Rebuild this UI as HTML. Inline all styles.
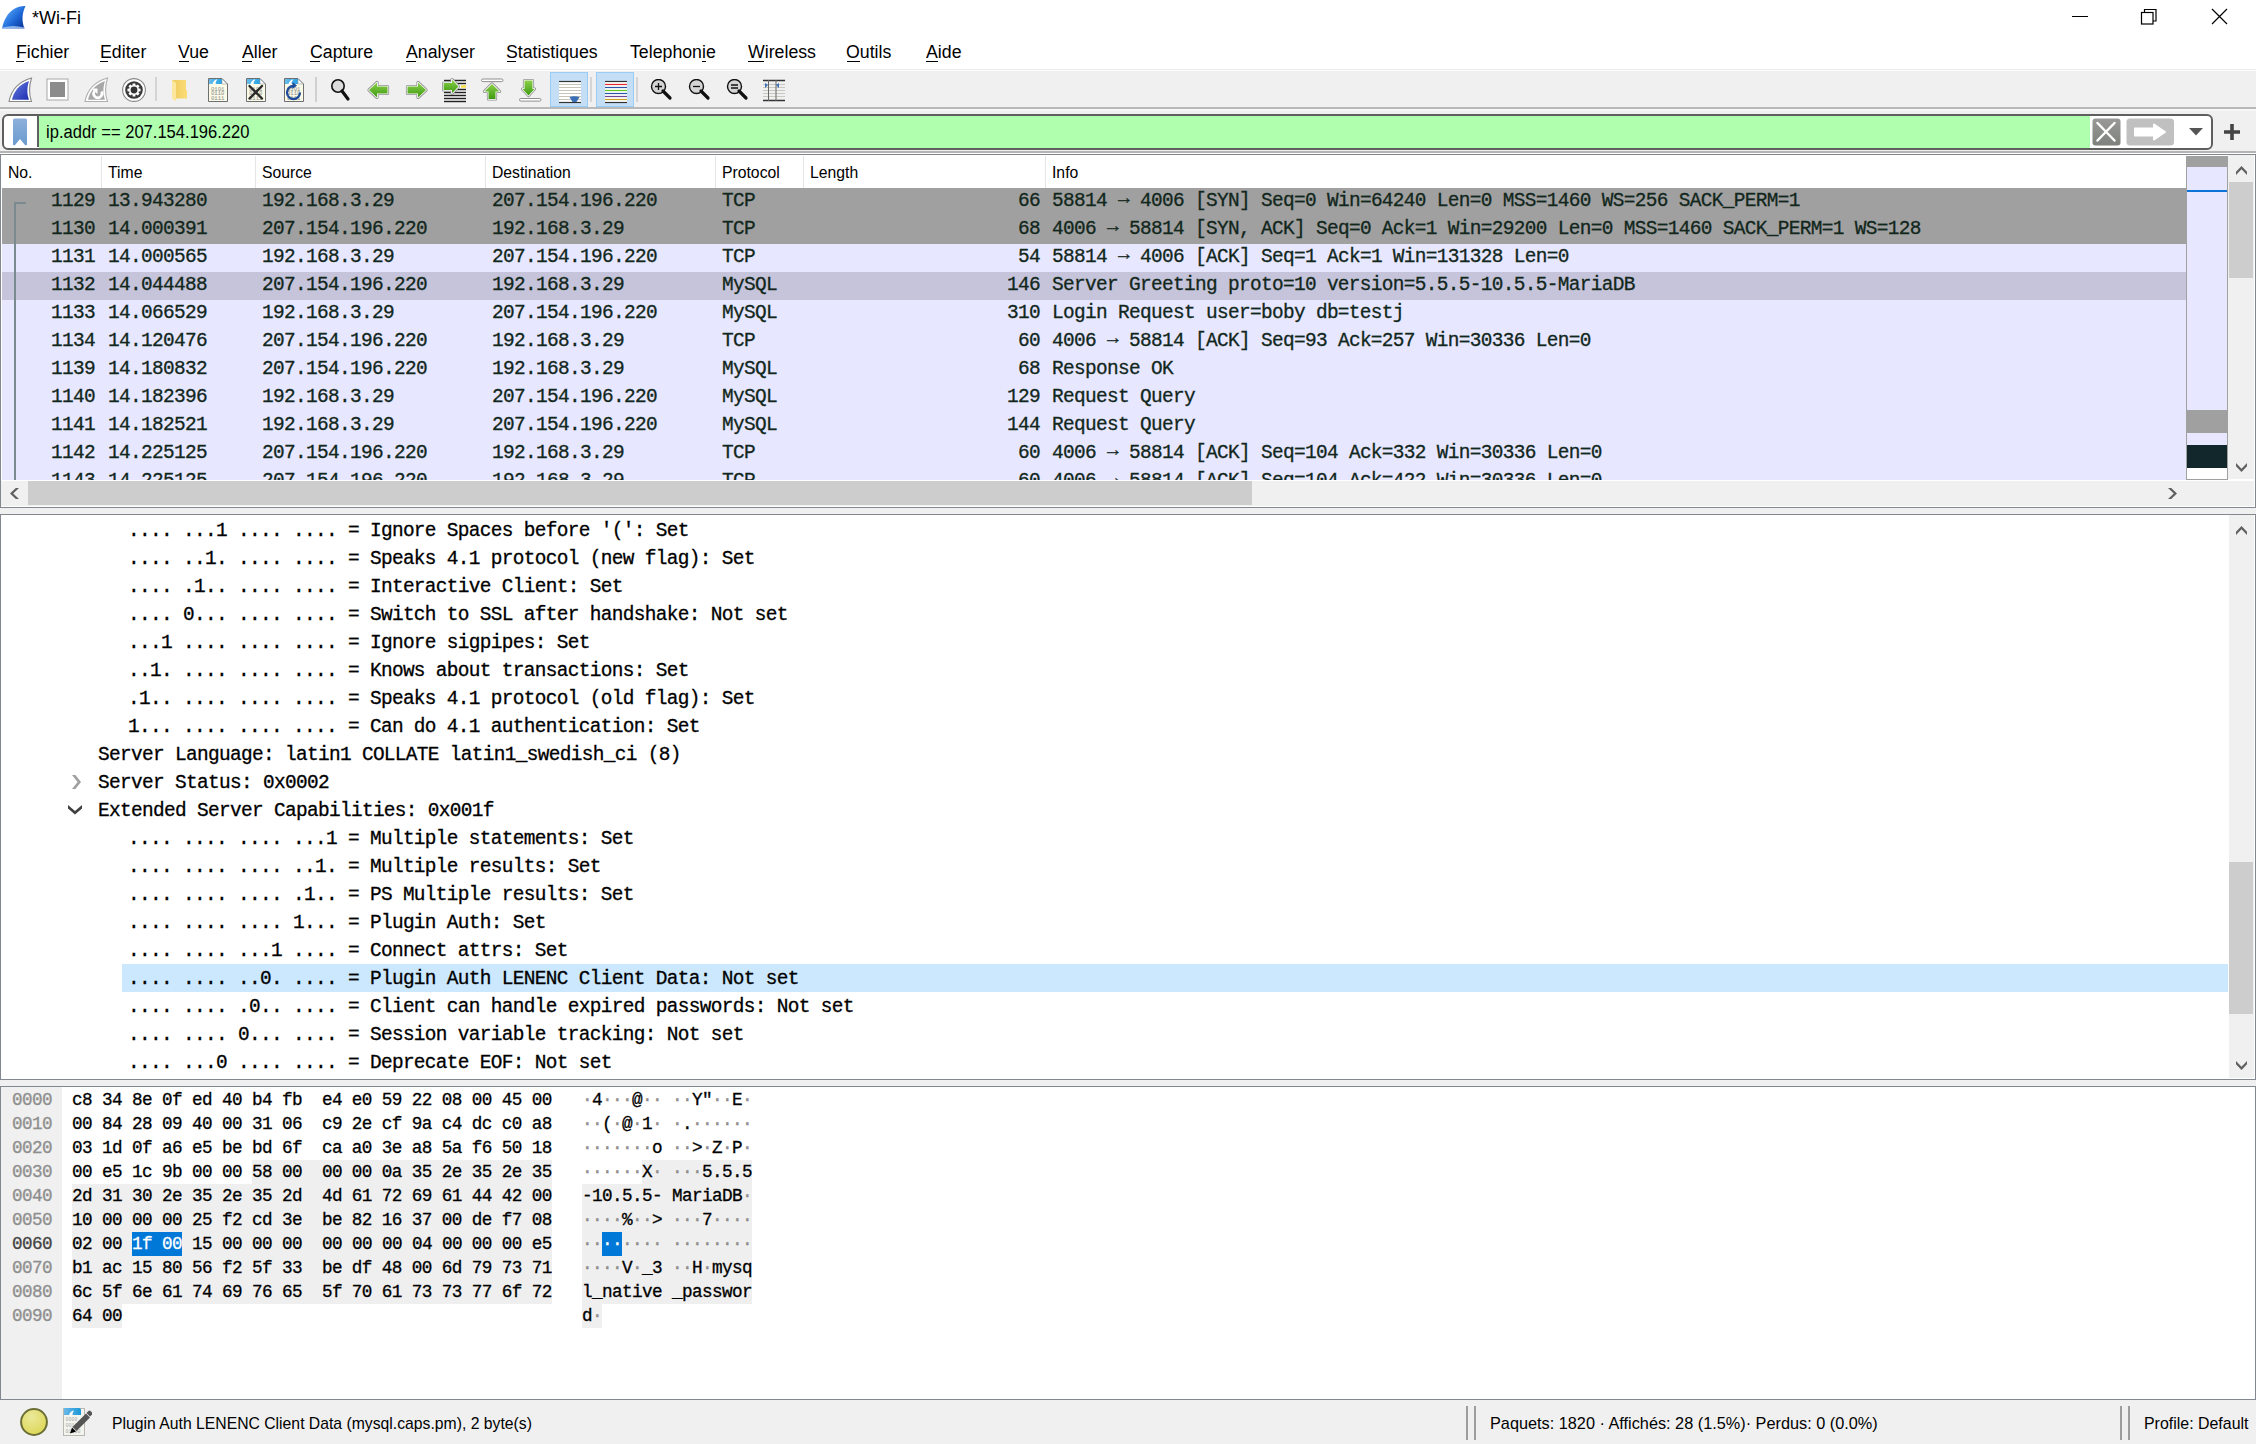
<!DOCTYPE html>
<html><head><meta charset="utf-8"><title>Wireshark</title>
<style>
html,body{margin:0;padding:0;}
body{width:2256px;height:1444px;position:relative;overflow:hidden;background:#fff;font-family:"Liberation Sans", sans-serif;}
body div, body span, body svg{position:absolute;}
body div div, body div span, body div svg{position:absolute;}
.t{font-family:"Liberation Sans", sans-serif;white-space:pre;line-height:normal;transform-origin:0 0;}
.m .ar{position:relative;top:-2px;}
.m .dt{position:relative;color:#8c8c8c;}
.m{font-family:"Liberation Mono", monospace;white-space:pre;line-height:normal;-webkit-text-stroke-width:0.3px;}
</style></head><body>
<div style="left:0px;top:0px;width:2256px;height:69px;background:#ffffff;"></div>
<svg style="left:0px;top:4px" width="27" height="26" viewBox="0 0 27 26">
<defs><linearGradient id="lg1" x1="0.1" y1="0.2" x2="0.9" y2="0.9"><stop offset="0" stop-color="#5aa8f8"/><stop offset="0.55" stop-color="#1f6ad8"/><stop offset="1" stop-color="#0a3aa0"/></linearGradient></defs>
<path d="M2 24.5 C4 14 10 5 19 2.7 Q23 1.8 25.5 2 C22 9 21.5 17 24.5 24.5 Z" fill="url(#lg1)"/>
<path d="M2.5 23.5 Q13 20.5 24.5 23.5 L25 24.5 L2 24.5 Z" fill="#a8c8f0" opacity="0.8"/>
</svg>
<span class="t" style="left:32px;top:8.01px;font-size:18px;color:#000;">*Wi-Fi</span>
<div style="left:2072px;top:16px;width:16px;height:1px;background:#000;"></div>
<svg style="left:2138px;top:6px" width="22" height="22" viewBox="0 0 22 22" fill="none" stroke="#000" stroke-width="1.2">
<rect x="3.5" y="6.5" width="11.5" height="11.5"/><path d="M6.5 6.5 V3.5 H18 V15 H15"/></svg>
<svg style="left:2208px;top:5px" width="24" height="24" viewBox="0 0 24 24" fill="none" stroke="#000" stroke-width="1.2">
<path d="M4 4 L19 19 M19 4 L4 19"/></svg>
<span class="t" style="left:16px;top:41.71px;font-size:18px;color:#000;transform:scaleX(0.985);">Fichier</span>
<div style="left:16px;top:61px;width:8px;height:1px;background:#000;"></div>
<span class="t" style="left:100px;top:41.71px;font-size:18px;color:#000;transform:scaleX(0.985);">Editer</span>
<div style="left:100px;top:61px;width:8px;height:1px;background:#000;"></div>
<span class="t" style="left:178px;top:41.71px;font-size:18px;color:#000;transform:scaleX(0.985);">Vue</span>
<div style="left:178.5px;top:61px;width:10px;height:1px;background:#000;"></div>
<span class="t" style="left:242px;top:41.71px;font-size:18px;color:#000;transform:scaleX(0.985);">Aller</span>
<div style="left:242px;top:61px;width:10px;height:1px;background:#000;"></div>
<span class="t" style="left:310px;top:41.71px;font-size:18px;color:#000;transform:scaleX(0.985);">Capture</span>
<div style="left:310px;top:61px;width:10px;height:1px;background:#000;"></div>
<span class="t" style="left:406px;top:41.71px;font-size:18px;color:#000;transform:scaleX(0.985);">Analyser</span>
<div style="left:406px;top:61px;width:10px;height:1px;background:#000;"></div>
<span class="t" style="left:506px;top:41.71px;font-size:18px;color:#000;transform:scaleX(0.985);">Statistiques</span>
<div style="left:506.5px;top:61px;width:9px;height:1px;background:#000;"></div>
<span class="t" style="left:630px;top:41.71px;font-size:18px;color:#000;transform:scaleX(0.985);">Telephonie</span>
<div style="left:701.5px;top:61px;width:4px;height:1px;background:#000;"></div>
<span class="t" style="left:748px;top:41.71px;font-size:18px;color:#000;transform:scaleX(0.985);">Wireless</span>
<div style="left:748px;top:61px;width:16px;height:1px;background:#000;"></div>
<span class="t" style="left:846px;top:41.71px;font-size:18px;color:#000;transform:scaleX(0.985);">Outils</span>
<div style="left:847px;top:61px;width:13px;height:1px;background:#000;"></div>
<span class="t" style="left:926px;top:41.71px;font-size:18px;color:#000;transform:scaleX(0.985);">Aide</span>
<div style="left:926px;top:61px;width:12px;height:1px;background:#000;"></div>
<div style="left:0px;top:69px;width:2256px;height:1px;background:#ececec;"></div>
<div style="left:0px;top:70px;width:2256px;height:1px;background:#fdfdfd;"></div>
<div style="left:0px;top:71px;width:2256px;height:36px;background:#f0f0f0;"></div>
<div style="left:0px;top:107px;width:2256px;height:2px;background:#b9b9b9;"></div>
<div style="left:0px;top:109px;width:2256px;height:44px;background:#f0f0f0;"></div>
<div style="left:0px;top:109px;width:2256px;height:2px;background:#f7f7f7;"></div>
<svg style="left:8px;top:77px" width="26" height="26" viewBox="0 0 26 26"><defs><linearGradient id="fin" x1="0" y1="0" x2="1" y2="1"><stop offset="0" stop-color="#6a7fe0"/><stop offset="1" stop-color="#1c2eb0"/></linearGradient></defs>
<path d="M1 24.5 C3 14 9.5 5 23.5 1 C21.3 8 20.8 17 23.5 24.5 Z" fill="#fff" stroke="#8a8a8a" stroke-width="1.1"/>
<path d="M4 22.8 C5.8 14.5 11 7.5 21 4 C19 10 18.8 17 21 22.8 Z" fill="url(#fin)"/></svg>
<svg style="left:46px;top:78px" width="24" height="24" viewBox="0 0 24 24"><rect x="1" y="1" width="21" height="21" fill="#fff" stroke="#a8a8a8" stroke-width="1"/><rect x="4" y="4" width="15" height="15" fill="#8c8c8c"/></svg>
<svg style="left:84px;top:77px" width="26" height="26" viewBox="0 0 26 26"><path d="M1 24.5 C3 14 9.5 5 23.5 1 C21.3 8 20.8 17 23.5 24.5 Z" fill="#fff" stroke="#b0b0b0" stroke-width="1.1"/>
<path d="M4 22.8 C5.8 14.5 11 7.5 21 4 C19 10 18.8 17 21 22.8 Z" fill="#a8a8a8"/>
<path d="M10.5 14 A4.2 4.2 0 1 0 17.5 14.5" fill="none" stroke="#fff" stroke-width="2.6"/>
<path d="M7.5 11.5 L13.5 11.5 L13.5 17 Z" fill="#fff"/></svg>
<svg style="left:121px;top:77px" width="26" height="26" viewBox="0 0 26 26"><circle cx="13" cy="13" r="11.4" fill="#fff" stroke="#8a8a8a" stroke-width="1.1"/>
<circle cx="13" cy="13" r="8.8" fill="#3a3a3a"/>
<path d="M17.78 11.52 L19.57 11.67 L19.57 14.33 L17.78 14.48 L17.42 15.33 L18.58 16.70 L16.70 18.58 L15.33 17.42 L14.48 17.78 L14.33 19.57 L11.67 19.57 L11.52 17.78 L10.67 17.42 L9.30 18.58 L7.42 16.70 L8.58 15.33 L8.22 14.48 L6.43 14.33 L6.43 11.67 L8.22 11.52 L8.58 10.67 L7.42 9.30 L9.30 7.42 L10.67 8.58 L11.52 8.22 L11.67 6.43 L14.33 6.43 L14.48 8.22 L15.33 8.58 L16.70 7.42 L18.58 9.30 L17.42 10.67 Z" fill="#fff"/>
<circle cx="13" cy="13" r="3.4" fill="#333"/></svg>
<div style="left:155px;top:77px;width:2px;height:24px;background:#d5d5d5;"></div>
<svg style="left:171px;top:79px" width="17" height="23" viewBox="0 0 17 23"><defs><linearGradient id="fd" x1="0" y1="0" x2="1" y2="0"><stop offset="0" stop-color="#eccb5c"/><stop offset="1" stop-color="#fbdc78"/></linearGradient></defs>
<path d="M1 1 H15 V11 H16 V19.5 H5 Z" fill="url(#fd)"/>
<path d="M1 1 L5 4 V22.5 L1 19.5 Z" fill="#fde79e"/></svg>
<svg style="left:207px;top:77px" width="22" height="26" viewBox="0 0 22 26"><defs><linearGradient id="fb207" x1="0" y1="0" x2="1" y2="0"><stop offset="0" stop-color="#68bdea"/><stop offset="1" stop-color="#0f98e2"/></linearGradient></defs>
<path d="M1.5 1.5 H15 L20.5 7 V24.5 H1.5 Z" fill="#fbfbe8" stroke="#6f6f6f" stroke-width="1"/>
<path d="M2 2 H15 L20 7 H2 Z" fill="url(#fb207)"/>
<path d="M5.5 7 Q6.5 3 10.5 2.3 Q8.3 4.5 8.8 7 Z" fill="#fff"/>
<path d="M15 2 V7 H20 Z" fill="#fff" stroke="#999" stroke-width="0.6"/>
<text x="4" y="13.5" font-family="Liberation Mono" font-size="5.6" fill="#8a8a8a">0101</text>
<text x="4" y="18" font-family="Liberation Mono" font-size="5.6" fill="#8a8a8a">0110</text>
<text x="4" y="22.5" font-family="Liberation Mono" font-size="5.6" fill="#8a8a8a">0111</text></svg>
<svg style="left:245px;top:77px" width="22" height="26" viewBox="0 0 22 26"><defs><linearGradient id="fb245" x1="0" y1="0" x2="1" y2="0"><stop offset="0" stop-color="#68bdea"/><stop offset="1" stop-color="#0f98e2"/></linearGradient></defs>
<path d="M1.5 1.5 H15 L20.5 7 V24.5 H1.5 Z" fill="#fbfbe8" stroke="#6f6f6f" stroke-width="1"/>
<path d="M2 2 H15 L20 7 H2 Z" fill="url(#fb245)"/>
<path d="M5.5 7 Q6.5 3 10.5 2.3 Q8.3 4.5 8.8 7 Z" fill="#fff"/>
<path d="M15 2 V7 H20 Z" fill="#fff" stroke="#999" stroke-width="0.6"/>
<text x="4" y="13.5" font-family="Liberation Mono" font-size="5.6" fill="#8a8a8a">0101</text>
<text x="4" y="18" font-family="Liberation Mono" font-size="5.6" fill="#8a8a8a">0110</text>
<text x="4" y="22.5" font-family="Liberation Mono" font-size="5.6" fill="#8a8a8a">0111</text><path d="M4.5 9 L17 21.5 M17 9 L4.5 21.5" stroke="#2a2a2a" stroke-width="2.4" stroke-linecap="round"/></svg>
<svg style="left:283px;top:77px" width="22" height="26" viewBox="0 0 22 26"><defs><linearGradient id="fb283" x1="0" y1="0" x2="1" y2="0"><stop offset="0" stop-color="#68bdea"/><stop offset="1" stop-color="#0f98e2"/></linearGradient></defs>
<path d="M1.5 1.5 H15 L20.5 7 V24.5 H1.5 Z" fill="#fbfbe8" stroke="#6f6f6f" stroke-width="1"/>
<path d="M2 2 H15 L20 7 H2 Z" fill="url(#fb283)"/>
<path d="M5.5 7 Q6.5 3 10.5 2.3 Q8.3 4.5 8.8 7 Z" fill="#fff"/>
<path d="M15 2 V7 H20 Z" fill="#fff" stroke="#999" stroke-width="0.6"/>
<text x="4" y="13.5" font-family="Liberation Mono" font-size="5.6" fill="#8a8a8a">0101</text>
<text x="4" y="18" font-family="Liberation Mono" font-size="5.6" fill="#8a8a8a">0110</text>
<text x="4" y="22.5" font-family="Liberation Mono" font-size="5.6" fill="#8a8a8a">0111</text><path d="M17 15.5 A6.5 6.5 0 1 1 10.5 9" fill="none" stroke="#1d4c9a" stroke-width="2.3"/><path d="M9.5 5 L14 8.5 L9.5 12 Z" fill="#1d4c9a"/></svg>
<div style="left:315px;top:77px;width:2px;height:25px;background:#d0d0d0;"></div>
<svg style="left:330px;top:78px" width="22" height="25" viewBox="0 0 22 25"><circle cx="8" cy="8" r="6.2" fill="#ddd" stroke="#111" stroke-width="1.6"/><path d="M12 13 L18 21" stroke="#111" stroke-width="3.2" stroke-linecap="round"/></svg>
<svg style="left:0;top:0" width="0" height="0"><defs><linearGradient id="gr" x1="0" y1="0" x2="0" y2="1"><stop offset="0" stop-color="#8bd04a"/><stop offset="1" stop-color="#3e9a12"/></linearGradient></defs></svg>
<svg style="left:366px;top:79px" width="25" height="22" viewBox="0 0 25 22"><path d="M3 11 L11 3.5 L11 7.5 L21.5 7.5 L21.5 14.5 L11 14.5 L11 18.5 Z" fill="none" stroke="#8f8f8f" stroke-width="3.2" stroke-linejoin="round"/><path d="M3 11 L11 3.5 L11 7.5 L21.5 7.5 L21.5 14.5 L11 14.5 L11 18.5 Z" fill="none" stroke="#fff" stroke-width="1.6" stroke-linejoin="round"/><path d="M3 11 L11 3.5 L11 7.5 L21.5 7.5 L21.5 14.5 L11 14.5 L11 18.5 Z" fill="url(#gr)"/></svg>
<svg style="left:404px;top:79px" width="25" height="22" viewBox="0 0 25 22"><path d="M22 11 L14 3.5 L14 7.5 L3.5 7.5 L3.5 14.5 L14 14.5 L14 18.5 Z" fill="none" stroke="#8f8f8f" stroke-width="3.2" stroke-linejoin="round"/><path d="M22 11 L14 3.5 L14 7.5 L3.5 7.5 L3.5 14.5 L14 14.5 L14 18.5 Z" fill="none" stroke="#fff" stroke-width="1.6" stroke-linejoin="round"/><path d="M22 11 L14 3.5 L14 7.5 L3.5 7.5 L3.5 14.5 L14 14.5 L14 18.5 Z" fill="url(#gr)"/></svg>
<svg style="left:440px;top:77px" width="28" height="27" viewBox="0 0 28 27"><rect x="4" y="2.5" width="22" height="23" fill="#fff"/><path d="M4 3.5 H26 M4 6.5 H26 M4 12.5 H26 M4 15.5 H26 M4 18.5 H26 M4 21.5 H26 M4 24.5 H26" stroke="#222" stroke-width="1.3"/>
<path d="M21 9.5 H26" stroke="#f5dc40" stroke-width="2.4"/><path d="M18.5 9.5 L12 2.7 L12 6 L3.6 6 L3.6 13 L12 13 L12 16.3 Z" fill="none" stroke="#8f8f8f" stroke-width="3.2" stroke-linejoin="round"/><path d="M18.5 9.5 L12 2.7 L12 6 L3.6 6 L3.6 13 L12 13 L12 16.3 Z" fill="none" stroke="#fff" stroke-width="1.6" stroke-linejoin="round"/><path d="M18.5 9.5 L12 2.7 L12 6 L3.6 6 L3.6 13 L12 13 L12 16.3 Z" fill="url(#gr)"/></svg>
<svg style="left:479px;top:77px" width="27" height="26" viewBox="0 0 27 26"><rect x="2.5" y="2" width="21.5" height="2.6" rx="1.3" fill="#fff" stroke="#8f8f8f" stroke-width="1"/><path d="M13 7 L20.5 14.5 L16.5 14.5 L16.5 22 L9.5 22 L9.5 14.5 L5.5 14.5 Z" fill="none" stroke="#8f8f8f" stroke-width="3.2" stroke-linejoin="round"/><path d="M13 7 L20.5 14.5 L16.5 14.5 L16.5 22 L9.5 22 L9.5 14.5 L5.5 14.5 Z" fill="none" stroke="#fff" stroke-width="1.6" stroke-linejoin="round"/><path d="M13 7 L20.5 14.5 L16.5 14.5 L16.5 22 L9.5 22 L9.5 14.5 L5.5 14.5 Z" fill="url(#gr)"/></svg>
<svg style="left:517px;top:77px" width="27" height="26" viewBox="0 0 27 26"><rect x="2.5" y="21.5" width="21.5" height="2.6" rx="1.3" fill="#fff" stroke="#8f8f8f" stroke-width="1"/><path d="M11.5 18.5 L17.5 12 L15.5 12 L15.5 3.6 L7.5 3.6 L7.5 12 L5.5 12 Z" fill="none" stroke="#8f8f8f" stroke-width="3.2" stroke-linejoin="round"/><path d="M11.5 18.5 L17.5 12 L15.5 12 L15.5 3.6 L7.5 3.6 L7.5 12 L5.5 12 Z" fill="none" stroke="#fff" stroke-width="1.6" stroke-linejoin="round"/><path d="M11.5 18.5 L17.5 12 L15.5 12 L15.5 3.6 L7.5 3.6 L7.5 12 L5.5 12 Z" fill="url(#gr)"/></svg>
<div style="left:550px;top:72px;width:38px;height:35px;background:#c4def5;box-sizing:border-box;border:1px solid #99ccf5;"></div>
<svg style="left:558px;top:79px" width="24" height="25" viewBox="0 0 24 25"><rect x="1" y="2" width="22" height="22" fill="#fff"/>
<path d="M1 2.5 H23" stroke="#333" stroke-width="1.2"/>
<path d="M1 5.5 H23 M1 8.5 H23 M1 11.5 H23 M1 14.5 H23 M1 17.5 H23 M1 20.5 H23" stroke="#c4c4ba" stroke-width="1.2"/>
<path d="M1 23.5 H23" stroke="#333" stroke-width="1.2"/>
<path d="M11.5 18 Q16.5 16.5 21.5 18 L18.5 23 L14.5 23 Z" fill="#3a6fb5"/></svg>
<div style="left:590px;top:77px;width:2px;height:25px;background:#d5d5d5;"></div>
<div style="left:596px;top:72px;width:38px;height:35px;background:#c4def5;box-sizing:border-box;border:1px solid #99ccf5;"></div>
<svg style="left:604px;top:79px" width="24" height="25" viewBox="0 0 24 25"><rect x="1" y="2" width="22" height="22" fill="#fff"/>
<path d="M1 2.5 H23" stroke="#333" stroke-width="1.2"/>
<path d="M1 5.5 H23" stroke="#e02828" stroke-width="1.2"/>
<path d="M1 8.5 H23" stroke="#2a56a8" stroke-width="1.2"/>
<path d="M1 11.5 H23" stroke="#5ac81e" stroke-width="1.2"/>
<path d="M1 14.5 H23" stroke="#2a56a8" stroke-width="1.2"/>
<path d="M1 17.5 H23" stroke="#704890" stroke-width="1.2"/>
<path d="M1 20.5 H23" stroke="#c8a020" stroke-width="1.2"/>
<path d="M1 23.5 H23" stroke="#333" stroke-width="1.2"/></svg>
<div style="left:636px;top:77px;width:2px;height:25px;background:#d5d5d5;"></div>
<svg style="left:650px;top:79px" width="24" height="24" viewBox="0 0 24 24"><circle cx="8.5" cy="7.5" r="7" fill="#d4d4d4" stroke="#111" stroke-width="1.4"/>
<path d="M13 12 L20 19" stroke="#111" stroke-width="3.2" stroke-linecap="round"/><path d="M5 7.5 H12 M8.5 4 V11" stroke="#111" stroke-width="1.3"/></svg>
<svg style="left:688px;top:79px" width="24" height="24" viewBox="0 0 24 24"><circle cx="8.5" cy="7.5" r="7" fill="#d4d4d4" stroke="#111" stroke-width="1.4"/>
<path d="M13 12 L20 19" stroke="#111" stroke-width="3.2" stroke-linecap="round"/><path d="M5 7.5 H12" stroke="#111" stroke-width="1.3"/></svg>
<svg style="left:726px;top:79px" width="24" height="24" viewBox="0 0 24 24"><circle cx="8.5" cy="7.5" r="7" fill="#d4d4d4" stroke="#111" stroke-width="1.4"/>
<path d="M13 12 L20 19" stroke="#111" stroke-width="3.2" stroke-linecap="round"/><path d="M5 6 H12 M5 9 H12" stroke="#111" stroke-width="1.3"/></svg>
<svg style="left:762px;top:78px" width="24" height="24" viewBox="0 0 24 24"><path d="M1 2.5 H23 M1 22.5 H23" stroke="#333" stroke-width="1.3"/>
<path d="M1 6.5 H23 M1 9.5 H23 M1 12.5 H23 M1 15.5 H23 M1 18.5 H23" stroke="#c8c8c0" stroke-width="1.1"/>
<path d="M6.5 2 V23 M14 2 V23" stroke="#666" stroke-width="1"/>
<path d="M3 5 L6 7 L3 10 Z M17 5 L14 7 L17 10 Z" fill="#3a6fb5"/></svg>
<div style="left:2px;top:114px;width:2211px;height:36px;box-sizing:border-box;border:2px solid #5f5f5f;border-radius:6px;background:#fff;"></div>
<div style="left:39px;top:116px;width:2051px;height:32px;background:#afffaf;"></div>
<div style="left:37px;top:116px;width:2px;height:31px;background:#5f5f5f;"></div>
<svg style="left:12px;top:118px" width="16" height="28" viewBox="0 0 16 28"><defs><linearGradient id="bm" x1="0" y1="0" x2="0" y2="1"><stop offset="0" stop-color="#8db0da"/><stop offset="1" stop-color="#6b9bd0"/></linearGradient></defs>
<path d="M1 2 Q1 0.5 2.5 0.5 H13.5 Q15 0.5 15 2 V26 Q15 28 13 27 L8 21 L3 27 Q1 28 1 26 Z" fill="url(#bm)"/></svg>
<span class="t" style="left:46px;top:121.71px;font-size:18px;color:#000;transform:scaleX(0.92);">ip.addr == 207.154.196.220</span>
<svg style="left:2092px;top:118px" width="29" height="28" viewBox="0 0 29 28"><defs><linearGradient id="cb" x1="0" y1="0" x2="0" y2="1"><stop offset="0" stop-color="#9a9a98"/><stop offset="1" stop-color="#7d807b"/></linearGradient></defs>
<rect x="0.5" y="0.5" width="28" height="27" rx="3" fill="url(#cb)"/>
<path d="M5.5 5 L22.5 22.5 M22.5 5 L5.5 22.5" stroke="#fff" stroke-width="2.5" stroke-linecap="round"/></svg>
<svg style="left:2126px;top:118px" width="49" height="28" viewBox="0 0 49 28"><rect x="0.5" y="0.5" width="47.5" height="27" rx="3.5" fill="#c0c0c0"/>
<defs><linearGradient id="ab" x1="0" y1="0" x2="1" y2="1"><stop offset="0" stop-color="#c8c8c8"/><stop offset="1" stop-color="#b8b8b8"/></linearGradient></defs><path d="M9 10.5 H28 V6.5 L39 14 L28 21.5 V17.5 H9 Z" fill="#fff" stroke="#fff" stroke-width="2" stroke-linejoin="round"/></svg>
<svg style="left:2188px;top:127px" width="16" height="10" viewBox="0 0 16 10"><path d="M1 1 H15 L8 8.5 Z" fill="#555"/></svg>
<svg style="left:2223px;top:123px" width="18" height="18" viewBox="0 0 18 18"><path d="M9 1 V17 M1 9 H17" stroke="#444" stroke-width="3.6"/></svg>
<div style="left:0px;top:151px;width:2256px;height:2px;background:#b4b4b4;"></div>
<div style="left:0px;top:154px;width:2256px;height:354px;background:#ffffff;box-sizing:border-box;border:1px solid #828790;"></div>
<div style="left:1px;top:155px;width:2185px;height:33px;background:#ffffff;"></div>
<div style="left:101px;top:156px;width:1px;height:32px;background:#e5e5e5;"></div>
<div style="left:255px;top:156px;width:1px;height:32px;background:#e5e5e5;"></div>
<div style="left:485px;top:156px;width:1px;height:32px;background:#e5e5e5;"></div>
<div style="left:715px;top:156px;width:1px;height:32px;background:#e5e5e5;"></div>
<div style="left:803px;top:156px;width:1px;height:32px;background:#e5e5e5;"></div>
<div style="left:1045px;top:156px;width:1px;height:32px;background:#e5e5e5;"></div>
<span class="t" style="left:8px;top:163.22px;font-size:17px;color:#000;transform:scaleX(0.926);">No.</span>
<span class="t" style="left:108px;top:163.22px;font-size:17px;color:#000;transform:scaleX(0.926);">Time</span>
<span class="t" style="left:262px;top:163.22px;font-size:17px;color:#000;transform:scaleX(0.926);">Source</span>
<span class="t" style="left:492px;top:163.22px;font-size:17px;color:#000;transform:scaleX(0.926);">Destination</span>
<span class="t" style="left:722px;top:163.22px;font-size:17px;color:#000;transform:scaleX(0.926);">Protocol</span>
<span class="t" style="left:810px;top:163.22px;font-size:17px;color:#000;transform:scaleX(0.926);">Length</span>
<span class="t" style="left:1052px;top:163.22px;font-size:17px;color:#000;transform:scaleX(0.926);">Info</span>
<div style="left:1px;top:188px;width:2185px;height:292px;overflow:hidden;">
<div style="left:1px;top:0px;width:2185px;height:28px;background:#a0a0a0;"></div>
<span class="m" style="left:50px;top:2.32px;font-size:19.433px;letter-spacing:-0.660px;color:#12271c;">1129</span>
<span class="m" style="left:107px;top:2.32px;font-size:19.433px;letter-spacing:-0.660px;color:#12271c;">13.943280</span>
<span class="m" style="left:261px;top:2.32px;font-size:19.433px;letter-spacing:-0.660px;color:#12271c;">192.168.3.29</span>
<span class="m" style="left:491px;top:2.32px;font-size:19.433px;letter-spacing:-0.660px;color:#12271c;">207.154.196.220</span>
<span class="m" style="left:721px;top:2.32px;font-size:19.433px;letter-spacing:-0.660px;color:#12271c;">TCP</span>
<span class="m" style="left:1017px;top:2.32px;font-size:19.433px;letter-spacing:-0.660px;color:#12271c;">66</span>
<span class="m" style="left:1051px;top:2.32px;font-size:19.433px;letter-spacing:-0.660px;color:#12271c;">58814 <span class="ar">→</span> 4006 [SYN] Seq=0 Win=64240 Len=0 MSS=1460 WS=256 SACK_PERM=1</span>
<div style="left:1px;top:28px;width:2185px;height:28px;background:#a0a0a0;"></div>
<span class="m" style="left:50px;top:30.32px;font-size:19.433px;letter-spacing:-0.660px;color:#12271c;">1130</span>
<span class="m" style="left:107px;top:30.32px;font-size:19.433px;letter-spacing:-0.660px;color:#12271c;">14.000391</span>
<span class="m" style="left:261px;top:30.32px;font-size:19.433px;letter-spacing:-0.660px;color:#12271c;">207.154.196.220</span>
<span class="m" style="left:491px;top:30.32px;font-size:19.433px;letter-spacing:-0.660px;color:#12271c;">192.168.3.29</span>
<span class="m" style="left:721px;top:30.32px;font-size:19.433px;letter-spacing:-0.660px;color:#12271c;">TCP</span>
<span class="m" style="left:1017px;top:30.32px;font-size:19.433px;letter-spacing:-0.660px;color:#12271c;">68</span>
<span class="m" style="left:1051px;top:30.32px;font-size:19.433px;letter-spacing:-0.660px;color:#12271c;">4006 <span class="ar">→</span> 58814 [SYN, ACK] Seq=0 Ack=1 Win=29200 Len=0 MSS=1460 SACK_PERM=1 WS=128</span>
<div style="left:1px;top:56px;width:2185px;height:28px;background:#e7e7ff;"></div>
<span class="m" style="left:50px;top:58.32px;font-size:19.433px;letter-spacing:-0.660px;color:#12271c;">1131</span>
<span class="m" style="left:107px;top:58.32px;font-size:19.433px;letter-spacing:-0.660px;color:#12271c;">14.000565</span>
<span class="m" style="left:261px;top:58.32px;font-size:19.433px;letter-spacing:-0.660px;color:#12271c;">192.168.3.29</span>
<span class="m" style="left:491px;top:58.32px;font-size:19.433px;letter-spacing:-0.660px;color:#12271c;">207.154.196.220</span>
<span class="m" style="left:721px;top:58.32px;font-size:19.433px;letter-spacing:-0.660px;color:#12271c;">TCP</span>
<span class="m" style="left:1017px;top:58.32px;font-size:19.433px;letter-spacing:-0.660px;color:#12271c;">54</span>
<span class="m" style="left:1051px;top:58.32px;font-size:19.433px;letter-spacing:-0.660px;color:#12271c;">58814 <span class="ar">→</span> 4006 [ACK] Seq=1 Ack=1 Win=131328 Len=0</span>
<div style="left:1px;top:84px;width:2185px;height:28px;background:#c6c4da;"></div>
<span class="m" style="left:50px;top:86.32px;font-size:19.433px;letter-spacing:-0.660px;color:#12271c;">1132</span>
<span class="m" style="left:107px;top:86.32px;font-size:19.433px;letter-spacing:-0.660px;color:#12271c;">14.044488</span>
<span class="m" style="left:261px;top:86.32px;font-size:19.433px;letter-spacing:-0.660px;color:#12271c;">207.154.196.220</span>
<span class="m" style="left:491px;top:86.32px;font-size:19.433px;letter-spacing:-0.660px;color:#12271c;">192.168.3.29</span>
<span class="m" style="left:721px;top:86.32px;font-size:19.433px;letter-spacing:-0.660px;color:#12271c;">MySQL</span>
<span class="m" style="left:1006px;top:86.32px;font-size:19.433px;letter-spacing:-0.660px;color:#12271c;">146</span>
<span class="m" style="left:1051px;top:86.32px;font-size:19.433px;letter-spacing:-0.660px;color:#12271c;">Server Greeting proto=10 version=5.5.5-10.5.5-MariaDB</span>
<div style="left:1px;top:112px;width:2185px;height:28px;background:#e7e7ff;"></div>
<span class="m" style="left:50px;top:114.32px;font-size:19.433px;letter-spacing:-0.660px;color:#12271c;">1133</span>
<span class="m" style="left:107px;top:114.32px;font-size:19.433px;letter-spacing:-0.660px;color:#12271c;">14.066529</span>
<span class="m" style="left:261px;top:114.32px;font-size:19.433px;letter-spacing:-0.660px;color:#12271c;">192.168.3.29</span>
<span class="m" style="left:491px;top:114.32px;font-size:19.433px;letter-spacing:-0.660px;color:#12271c;">207.154.196.220</span>
<span class="m" style="left:721px;top:114.32px;font-size:19.433px;letter-spacing:-0.660px;color:#12271c;">MySQL</span>
<span class="m" style="left:1006px;top:114.32px;font-size:19.433px;letter-spacing:-0.660px;color:#12271c;">310</span>
<span class="m" style="left:1051px;top:114.32px;font-size:19.433px;letter-spacing:-0.660px;color:#12271c;">Login Request user=boby db=testj</span>
<div style="left:1px;top:140px;width:2185px;height:28px;background:#e7e7ff;"></div>
<span class="m" style="left:50px;top:142.32px;font-size:19.433px;letter-spacing:-0.660px;color:#12271c;">1134</span>
<span class="m" style="left:107px;top:142.32px;font-size:19.433px;letter-spacing:-0.660px;color:#12271c;">14.120476</span>
<span class="m" style="left:261px;top:142.32px;font-size:19.433px;letter-spacing:-0.660px;color:#12271c;">207.154.196.220</span>
<span class="m" style="left:491px;top:142.32px;font-size:19.433px;letter-spacing:-0.660px;color:#12271c;">192.168.3.29</span>
<span class="m" style="left:721px;top:142.32px;font-size:19.433px;letter-spacing:-0.660px;color:#12271c;">TCP</span>
<span class="m" style="left:1017px;top:142.32px;font-size:19.433px;letter-spacing:-0.660px;color:#12271c;">60</span>
<span class="m" style="left:1051px;top:142.32px;font-size:19.433px;letter-spacing:-0.660px;color:#12271c;">4006 <span class="ar">→</span> 58814 [ACK] Seq=93 Ack=257 Win=30336 Len=0</span>
<div style="left:1px;top:168px;width:2185px;height:28px;background:#e7e7ff;"></div>
<span class="m" style="left:50px;top:170.32px;font-size:19.433px;letter-spacing:-0.660px;color:#12271c;">1139</span>
<span class="m" style="left:107px;top:170.32px;font-size:19.433px;letter-spacing:-0.660px;color:#12271c;">14.180832</span>
<span class="m" style="left:261px;top:170.32px;font-size:19.433px;letter-spacing:-0.660px;color:#12271c;">207.154.196.220</span>
<span class="m" style="left:491px;top:170.32px;font-size:19.433px;letter-spacing:-0.660px;color:#12271c;">192.168.3.29</span>
<span class="m" style="left:721px;top:170.32px;font-size:19.433px;letter-spacing:-0.660px;color:#12271c;">MySQL</span>
<span class="m" style="left:1017px;top:170.32px;font-size:19.433px;letter-spacing:-0.660px;color:#12271c;">68</span>
<span class="m" style="left:1051px;top:170.32px;font-size:19.433px;letter-spacing:-0.660px;color:#12271c;">Response OK</span>
<div style="left:1px;top:196px;width:2185px;height:28px;background:#e7e7ff;"></div>
<span class="m" style="left:50px;top:198.32px;font-size:19.433px;letter-spacing:-0.660px;color:#12271c;">1140</span>
<span class="m" style="left:107px;top:198.32px;font-size:19.433px;letter-spacing:-0.660px;color:#12271c;">14.182396</span>
<span class="m" style="left:261px;top:198.32px;font-size:19.433px;letter-spacing:-0.660px;color:#12271c;">192.168.3.29</span>
<span class="m" style="left:491px;top:198.32px;font-size:19.433px;letter-spacing:-0.660px;color:#12271c;">207.154.196.220</span>
<span class="m" style="left:721px;top:198.32px;font-size:19.433px;letter-spacing:-0.660px;color:#12271c;">MySQL</span>
<span class="m" style="left:1006px;top:198.32px;font-size:19.433px;letter-spacing:-0.660px;color:#12271c;">129</span>
<span class="m" style="left:1051px;top:198.32px;font-size:19.433px;letter-spacing:-0.660px;color:#12271c;">Request Query</span>
<div style="left:1px;top:224px;width:2185px;height:28px;background:#e7e7ff;"></div>
<span class="m" style="left:50px;top:226.32px;font-size:19.433px;letter-spacing:-0.660px;color:#12271c;">1141</span>
<span class="m" style="left:107px;top:226.32px;font-size:19.433px;letter-spacing:-0.660px;color:#12271c;">14.182521</span>
<span class="m" style="left:261px;top:226.32px;font-size:19.433px;letter-spacing:-0.660px;color:#12271c;">192.168.3.29</span>
<span class="m" style="left:491px;top:226.32px;font-size:19.433px;letter-spacing:-0.660px;color:#12271c;">207.154.196.220</span>
<span class="m" style="left:721px;top:226.32px;font-size:19.433px;letter-spacing:-0.660px;color:#12271c;">MySQL</span>
<span class="m" style="left:1006px;top:226.32px;font-size:19.433px;letter-spacing:-0.660px;color:#12271c;">144</span>
<span class="m" style="left:1051px;top:226.32px;font-size:19.433px;letter-spacing:-0.660px;color:#12271c;">Request Query</span>
<div style="left:1px;top:252px;width:2185px;height:28px;background:#e7e7ff;"></div>
<span class="m" style="left:50px;top:254.32px;font-size:19.433px;letter-spacing:-0.660px;color:#12271c;">1142</span>
<span class="m" style="left:107px;top:254.32px;font-size:19.433px;letter-spacing:-0.660px;color:#12271c;">14.225125</span>
<span class="m" style="left:261px;top:254.32px;font-size:19.433px;letter-spacing:-0.660px;color:#12271c;">207.154.196.220</span>
<span class="m" style="left:491px;top:254.32px;font-size:19.433px;letter-spacing:-0.660px;color:#12271c;">192.168.3.29</span>
<span class="m" style="left:721px;top:254.32px;font-size:19.433px;letter-spacing:-0.660px;color:#12271c;">TCP</span>
<span class="m" style="left:1017px;top:254.32px;font-size:19.433px;letter-spacing:-0.660px;color:#12271c;">60</span>
<span class="m" style="left:1051px;top:254.32px;font-size:19.433px;letter-spacing:-0.660px;color:#12271c;">4006 <span class="ar">→</span> 58814 [ACK] Seq=104 Ack=332 Win=30336 Len=0</span>
<div style="left:1px;top:280px;width:2185px;height:28px;background:#e7e7ff;"></div>
<span class="m" style="left:50px;top:282.32px;font-size:19.433px;letter-spacing:-0.660px;color:#12271c;">1143</span>
<span class="m" style="left:107px;top:282.32px;font-size:19.433px;letter-spacing:-0.660px;color:#12271c;">14.225125</span>
<span class="m" style="left:261px;top:282.32px;font-size:19.433px;letter-spacing:-0.660px;color:#12271c;">207.154.196.220</span>
<span class="m" style="left:491px;top:282.32px;font-size:19.433px;letter-spacing:-0.660px;color:#12271c;">192.168.3.29</span>
<span class="m" style="left:721px;top:282.32px;font-size:19.433px;letter-spacing:-0.660px;color:#12271c;">TCP</span>
<span class="m" style="left:1017px;top:282.32px;font-size:19.433px;letter-spacing:-0.660px;color:#12271c;">60</span>
<span class="m" style="left:1051px;top:282.32px;font-size:19.433px;letter-spacing:-0.660px;color:#12271c;">4006 <span class="ar">→</span> 58814 [ACK] Seq=104 Ack=422 Win=30336 Len=0</span>
<div style="left:13px;top:14px;width:2px;height:280px;background:#7b8a8e;"></div>
<div style="left:13px;top:14px;width:12px;height:2px;background:#7b8a8e;"></div>
</div>
<div style="left:2186px;top:156px;width:42px;height:324px;background:#a0a0a0;"></div>
<div style="left:2187px;top:157px;width:40px;height:322px;background:#e7e7ff;"></div>
<div style="left:2187px;top:157px;width:40px;height:10px;background:#a0a0a0;"></div>
<div style="left:2187px;top:190px;width:40px;height:2px;background:#0b74d6;"></div>
<div style="left:2187px;top:410px;width:40px;height:23px;background:#a0a0a0;"></div>
<div style="left:2187px;top:445px;width:40px;height:23px;background:#12272c;"></div>
<div style="left:2187px;top:468px;width:40px;height:11px;background:#ffffff;"></div>
<div style="left:2228px;top:155px;width:26px;height:324px;background:#f0f0f0;"></div>
<div style="left:2229px;top:182px;width:24px;height:96px;background:#cdcdcd;"></div>
<svg style="left:2236px;top:166px" width="11" height="9" viewBox="0 0 11 9"><path d="M0 9 L5.5 3.2 L11 9 L11 5.8 L5.5 0 L0 5.8 Z" fill="#606060"/></svg>
<svg style="left:2236px;top:463px" width="11" height="9" viewBox="0 0 11 9"><path d="M0 0 L5.5 5.8 L11 0 L11 3.2 L5.5 9 L0 3.2 Z" fill="#606060"/></svg>
<div style="left:1px;top:481px;width:2253px;height:25px;background:#f0f0f0;"></div>
<div style="left:28px;top:481px;width:1224px;height:24px;background:#cdcdcd;"></div>
<svg style="left:10px;top:488px" width="9" height="11" viewBox="0 0 9 11"><path d="M9 0 L3.2 5.5 L9 11 L5.8 11 L0 5.5 L5.8 0 Z" fill="#606060"/></svg>
<svg style="left:2168px;top:488px" width="9" height="11" viewBox="0 0 9 11"><path d="M0 0 L5.8 5.5 L0 11 L3.2 11 L9 5.5 L3.2 0 Z" fill="#606060"/></svg>
<div style="left:0px;top:508px;width:2256px;height:6px;background:#f0f0f0;"></div>
<div style="left:0px;top:514px;width:2256px;height:566px;background:#ffffff;box-sizing:border-box;border:1px solid #828790;"></div>
<div style="left:122px;top:964px;width:2106px;height:28px;background:#cce8ff;"></div>
<span class="m" style="left:128px;top:520.32px;font-size:19.433px;letter-spacing:-0.660px;color:#000;">.... ...1 .... .... = Ignore Spaces before '(': Set</span>
<span class="m" style="left:128px;top:548.32px;font-size:19.433px;letter-spacing:-0.660px;color:#000;">.... ..1. .... .... = Speaks 4.1 protocol (new flag): Set</span>
<span class="m" style="left:128px;top:576.32px;font-size:19.433px;letter-spacing:-0.660px;color:#000;">.... .1.. .... .... = Interactive Client: Set</span>
<span class="m" style="left:128px;top:604.32px;font-size:19.433px;letter-spacing:-0.660px;color:#000;">.... 0... .... .... = Switch to SSL after handshake: Not set</span>
<span class="m" style="left:128px;top:632.32px;font-size:19.433px;letter-spacing:-0.660px;color:#000;">...1 .... .... .... = Ignore sigpipes: Set</span>
<span class="m" style="left:128px;top:660.32px;font-size:19.433px;letter-spacing:-0.660px;color:#000;">..1. .... .... .... = Knows about transactions: Set</span>
<span class="m" style="left:128px;top:688.32px;font-size:19.433px;letter-spacing:-0.660px;color:#000;">.1.. .... .... .... = Speaks 4.1 protocol (old flag): Set</span>
<span class="m" style="left:128px;top:716.32px;font-size:19.433px;letter-spacing:-0.660px;color:#000;">1... .... .... .... = Can do 4.1 authentication: Set</span>
<span class="m" style="left:98px;top:744.32px;font-size:19.433px;letter-spacing:-0.660px;color:#000;">Server Language: latin1 COLLATE latin1_swedish_ci (8)</span>
<span class="m" style="left:98px;top:772.32px;font-size:19.433px;letter-spacing:-0.660px;color:#000;">Server Status: 0x0002</span>
<span class="m" style="left:98px;top:800.32px;font-size:19.433px;letter-spacing:-0.660px;color:#000;">Extended Server Capabilities: 0x001f</span>
<span class="m" style="left:128px;top:828.32px;font-size:19.433px;letter-spacing:-0.660px;color:#000;">.... .... .... ...1 = Multiple statements: Set</span>
<span class="m" style="left:128px;top:856.32px;font-size:19.433px;letter-spacing:-0.660px;color:#000;">.... .... .... ..1. = Multiple results: Set</span>
<span class="m" style="left:128px;top:884.32px;font-size:19.433px;letter-spacing:-0.660px;color:#000;">.... .... .... .1.. = PS Multiple results: Set</span>
<span class="m" style="left:128px;top:912.32px;font-size:19.433px;letter-spacing:-0.660px;color:#000;">.... .... .... 1... = Plugin Auth: Set</span>
<span class="m" style="left:128px;top:940.32px;font-size:19.433px;letter-spacing:-0.660px;color:#000;">.... .... ...1 .... = Connect attrs: Set</span>
<span class="m" style="left:128px;top:968.32px;font-size:19.433px;letter-spacing:-0.660px;color:#000;">.... .... ..0. .... = Plugin Auth LENENC Client Data: Not set</span>
<span class="m" style="left:128px;top:996.32px;font-size:19.433px;letter-spacing:-0.660px;color:#000;">.... .... .0.. .... = Client can handle expired passwords: Not set</span>
<span class="m" style="left:128px;top:1024.32px;font-size:19.433px;letter-spacing:-0.660px;color:#000;">.... .... 0... .... = Session variable tracking: Not set</span>
<span class="m" style="left:128px;top:1052.32px;font-size:19.433px;letter-spacing:-0.660px;color:#000;">.... ...0 .... .... = Deprecate EOF: Not set</span>
<svg style="left:72px;top:775px" width="9" height="14" viewBox="0 0 9 14"><path d="M0 0 L5.6 7.0 L0 14 L3.4 14 L9 7.0 L3.4 0 Z" fill="#a0a0a0"/></svg>
<svg style="left:68px;top:805px" width="14" height="9.5" viewBox="0 0 14 9.5"><path d="M0 0 L7.0 5.9 L14 0 L14 3.6 L7.0 9.5 L0 3.6 Z" fill="#404040"/></svg>
<div style="left:2229px;top:515px;width:25px;height:563px;background:#f0f0f0;"></div>
<div style="left:2229px;top:862px;width:24px;height:152px;background:#cdcdcd;"></div>
<svg style="left:2236px;top:526px" width="11" height="9" viewBox="0 0 11 9"><path d="M0 9 L5.5 3.2 L11 9 L11 5.8 L5.5 0 L0 5.8 Z" fill="#606060"/></svg>
<svg style="left:2236px;top:1061px" width="11" height="9" viewBox="0 0 11 9"><path d="M0 0 L5.5 5.8 L11 0 L11 3.2 L5.5 9 L0 3.2 Z" fill="#606060"/></svg>
<div style="left:0px;top:1080px;width:2256px;height:6px;background:#f0f0f0;"></div>
<div style="left:0px;top:1086px;width:2256px;height:314px;background:#ffffff;box-sizing:border-box;border:1px solid #828790;"></div>
<div style="left:1px;top:1087px;width:61px;height:312px;background:#f0f0f0;"></div>
<div style="left:252px;top:1160px;width:300px;height:24px;background:#efefef;"></div>
<div style="left:72px;top:1184px;width:480px;height:120px;background:#efefef;"></div>
<div style="left:72px;top:1304px;width:50px;height:24px;background:#efefef;"></div>
<div style="left:642px;top:1160px;width:110px;height:24px;background:#efefef;"></div>
<div style="left:582px;top:1184px;width:170px;height:120px;background:#efefef;"></div>
<div style="left:582px;top:1304px;width:20px;height:24px;background:#efefef;"></div>
<div style="left:132px;top:1232px;width:50px;height:24px;background:#0078d7;"></div>
<div style="left:602px;top:1232px;width:20px;height:24px;background:#0078d7;"></div>
<span class="m" style="left:12px;top:1090.29px;font-size:17.667px;letter-spacing:-0.600px;color:#8e8e8e;">0000</span>
<span class="m" style="left:72px;top:1090.29px;font-size:17.667px;letter-spacing:-0.600px;color:#000;">c8 34 8e 0f ed 40 b4 fb  e4 e0 59 22 08 00 45 00</span>
<span class="m" style="left:582px;top:1090.29px;font-size:17.667px;letter-spacing:-0.600px;color:#000;"><span class="dt">·</span>4<span class="dt">·</span><span class="dt">·</span><span class="dt">·</span>@<span class="dt">·</span><span class="dt">·</span> <span class="dt">·</span><span class="dt">·</span>Y"<span class="dt">·</span><span class="dt">·</span>E<span class="dt">·</span></span>
<span class="m" style="left:12px;top:1114.29px;font-size:17.667px;letter-spacing:-0.600px;color:#8e8e8e;">0010</span>
<span class="m" style="left:72px;top:1114.29px;font-size:17.667px;letter-spacing:-0.600px;color:#000;">00 84 28 09 40 00 31 06  c9 2e cf 9a c4 dc c0 a8</span>
<span class="m" style="left:582px;top:1114.29px;font-size:17.667px;letter-spacing:-0.600px;color:#000;"><span class="dt">·</span><span class="dt">·</span>(<span class="dt">·</span>@<span class="dt">·</span>1<span class="dt">·</span> <span class="dt">·</span>.<span class="dt">·</span><span class="dt">·</span><span class="dt">·</span><span class="dt">·</span><span class="dt">·</span><span class="dt">·</span></span>
<span class="m" style="left:12px;top:1138.29px;font-size:17.667px;letter-spacing:-0.600px;color:#8e8e8e;">0020</span>
<span class="m" style="left:72px;top:1138.29px;font-size:17.667px;letter-spacing:-0.600px;color:#000;">03 1d 0f a6 e5 be bd 6f  ca a0 3e a8 5a f6 50 18</span>
<span class="m" style="left:582px;top:1138.29px;font-size:17.667px;letter-spacing:-0.600px;color:#000;"><span class="dt">·</span><span class="dt">·</span><span class="dt">·</span><span class="dt">·</span><span class="dt">·</span><span class="dt">·</span><span class="dt">·</span>o <span class="dt">·</span><span class="dt">·</span>&gt;<span class="dt">·</span>Z<span class="dt">·</span>P<span class="dt">·</span></span>
<span class="m" style="left:12px;top:1162.29px;font-size:17.667px;letter-spacing:-0.600px;color:#8e8e8e;">0030</span>
<span class="m" style="left:72px;top:1162.29px;font-size:17.667px;letter-spacing:-0.600px;color:#000;">00 e5 1c 9b 00 00 58 00  00 00 0a 35 2e 35 2e 35</span>
<span class="m" style="left:582px;top:1162.29px;font-size:17.667px;letter-spacing:-0.600px;color:#000;"><span class="dt">·</span><span class="dt">·</span><span class="dt">·</span><span class="dt">·</span><span class="dt">·</span><span class="dt">·</span>X<span class="dt">·</span> <span class="dt">·</span><span class="dt">·</span><span class="dt">·</span>5.5.5</span>
<span class="m" style="left:12px;top:1186.29px;font-size:17.667px;letter-spacing:-0.600px;color:#8e8e8e;">0040</span>
<span class="m" style="left:72px;top:1186.29px;font-size:17.667px;letter-spacing:-0.600px;color:#000;">2d 31 30 2e 35 2e 35 2d  4d 61 72 69 61 44 42 00</span>
<span class="m" style="left:582px;top:1186.29px;font-size:17.667px;letter-spacing:-0.600px;color:#000;">-10.5.5- MariaDB<span class="dt">·</span></span>
<span class="m" style="left:12px;top:1210.29px;font-size:17.667px;letter-spacing:-0.600px;color:#8e8e8e;">0050</span>
<span class="m" style="left:72px;top:1210.29px;font-size:17.667px;letter-spacing:-0.600px;color:#000;">10 00 00 00 25 f2 cd 3e  be 82 16 37 00 de f7 08</span>
<span class="m" style="left:582px;top:1210.29px;font-size:17.667px;letter-spacing:-0.600px;color:#000;"><span class="dt">·</span><span class="dt">·</span><span class="dt">·</span><span class="dt">·</span>%<span class="dt">·</span><span class="dt">·</span>&gt; <span class="dt">·</span><span class="dt">·</span><span class="dt">·</span>7<span class="dt">·</span><span class="dt">·</span><span class="dt">·</span><span class="dt">·</span></span>
<span class="m" style="left:12px;top:1234.29px;font-size:17.667px;letter-spacing:-0.600px;color:#444444;">0060</span>
<span class="m" style="left:72px;top:1234.29px;font-size:17.667px;letter-spacing:-0.600px;color:#000;">02 00 </span>
<span class="m" style="left:132px;top:1234.29px;font-size:17.667px;letter-spacing:-0.600px;color:#fff;">1f 00</span>
<span class="m" style="left:182px;top:1234.29px;font-size:17.667px;letter-spacing:-0.600px;color:#000;"> 15 00 00 00  00 00 00 04 00 00 00 e5</span>
<span class="m" style="left:582px;top:1234.29px;font-size:17.667px;letter-spacing:-0.600px;color:#000;"><span class="dt">·</span><span class="dt">·</span></span>
<span class="m" style="left:602px;top:1234.29px;font-size:17.667px;letter-spacing:-0.600px;color:#fff;">··</span>
<span class="m" style="left:622px;top:1234.29px;font-size:17.667px;letter-spacing:-0.600px;color:#000;"><span class="dt">·</span><span class="dt">·</span><span class="dt">·</span><span class="dt">·</span> <span class="dt">·</span><span class="dt">·</span><span class="dt">·</span><span class="dt">·</span><span class="dt">·</span><span class="dt">·</span><span class="dt">·</span><span class="dt">·</span></span>
<span class="m" style="left:12px;top:1258.29px;font-size:17.667px;letter-spacing:-0.600px;color:#8e8e8e;">0070</span>
<span class="m" style="left:72px;top:1258.29px;font-size:17.667px;letter-spacing:-0.600px;color:#000;">b1 ac 15 80 56 f2 5f 33  be df 48 00 6d 79 73 71</span>
<span class="m" style="left:582px;top:1258.29px;font-size:17.667px;letter-spacing:-0.600px;color:#000;"><span class="dt">·</span><span class="dt">·</span><span class="dt">·</span><span class="dt">·</span>V<span class="dt">·</span>_3 <span class="dt">·</span><span class="dt">·</span>H<span class="dt">·</span>mysq</span>
<span class="m" style="left:12px;top:1282.29px;font-size:17.667px;letter-spacing:-0.600px;color:#8e8e8e;">0080</span>
<span class="m" style="left:72px;top:1282.29px;font-size:17.667px;letter-spacing:-0.600px;color:#000;">6c 5f 6e 61 74 69 76 65  5f 70 61 73 73 77 6f 72</span>
<span class="m" style="left:582px;top:1282.29px;font-size:17.667px;letter-spacing:-0.600px;color:#000;">l_native _passwor</span>
<span class="m" style="left:12px;top:1306.29px;font-size:17.667px;letter-spacing:-0.600px;color:#8e8e8e;">0090</span>
<span class="m" style="left:72px;top:1306.29px;font-size:17.667px;letter-spacing:-0.600px;color:#000;">64 00</span>
<span class="m" style="left:582px;top:1306.29px;font-size:17.667px;letter-spacing:-0.600px;color:#000;">d<span class="dt">·</span></span>
<div style="left:0px;top:1400px;width:2256px;height:44px;background:#f0f0f0;"></div>
<svg style="left:19px;top:1407px" width="30" height="30" viewBox="0 0 30 30"><defs><radialGradient id="yc" cx="0.4" cy="0.3" r="0.8"><stop offset="0" stop-color="#ebe89a"/><stop offset="1" stop-color="#dcd650"/></radialGradient></defs>
<circle cx="15" cy="15" r="12.9" fill="url(#yc)" stroke="#6b6e35" stroke-width="2"/></svg>
<svg style="left:62px;top:1406px" width="30" height="31" viewBox="0 0 30 31"><defs><linearGradient id="eb" x1="0" y1="0" x2="1" y2="0"><stop offset="0" stop-color="#6ab8e8"/><stop offset="1" stop-color="#1a98d8"/></linearGradient></defs>
<rect x="1.5" y="2.5" width="21" height="27" fill="#f4f4ee" stroke="#b8b8b0" stroke-width="1"/>
<path d="M2 2 H17 Q19 2 19 4 V9 H2 Z" fill="url(#eb)"/>
<path d="M7 9.5 Q8 5 12 4.5 Q10 7 10.5 9.5 Z" fill="#fff"/>
<text x="3.5" y="15" font-family="Liberation Mono" font-size="5" fill="#aaa">0000</text>
<text x="3.5" y="21" font-family="Liberation Mono" font-size="5" fill="#aaa">0011</text>
<text x="3.5" y="27" font-family="Liberation Mono" font-size="5" fill="#aaa">01100</text>
<path d="M10.5 21 L24 7.5 L28 11.5 L14.5 25 Z" fill="#555"/>
<path d="M24.5 7 L26.5 5 Q27.5 4 28.5 5 L30 6.5 Q31 7.5 30 8.5 L28 10.5 Z" fill="#555"/>
<path d="M10 21.5 L14 25.5 L8 27.5 Z" fill="#000"/></svg>
<span class="t" style="left:112px;top:1414.32px;font-size:17px;color:#000;transform:scaleX(0.926);">Plugin Auth LENENC Client Data (mysql.caps.pm), 2 byte(s)</span>
<div style="left:1466px;top:1406px;width:2px;height:34px;background:#9e9e9e;"></div>
<div style="left:1474px;top:1406px;width:2px;height:34px;background:#9e9e9e;"></div>
<span class="t" style="left:1490px;top:1414.32px;font-size:17px;color:#000;transform:scaleX(0.957);">Paquets: 1820 · Affichés: 28 (1.5%)· Perdus: 0 (0.0%)</span>
<div style="left:2120px;top:1406px;width:2px;height:34px;background:#9e9e9e;"></div>
<div style="left:2128px;top:1406px;width:2px;height:34px;background:#9e9e9e;"></div>
<span class="t" style="left:2144px;top:1414.32px;font-size:17px;color:#000;transform:scaleX(0.937);">Profile: Default</span>
</body></html>
